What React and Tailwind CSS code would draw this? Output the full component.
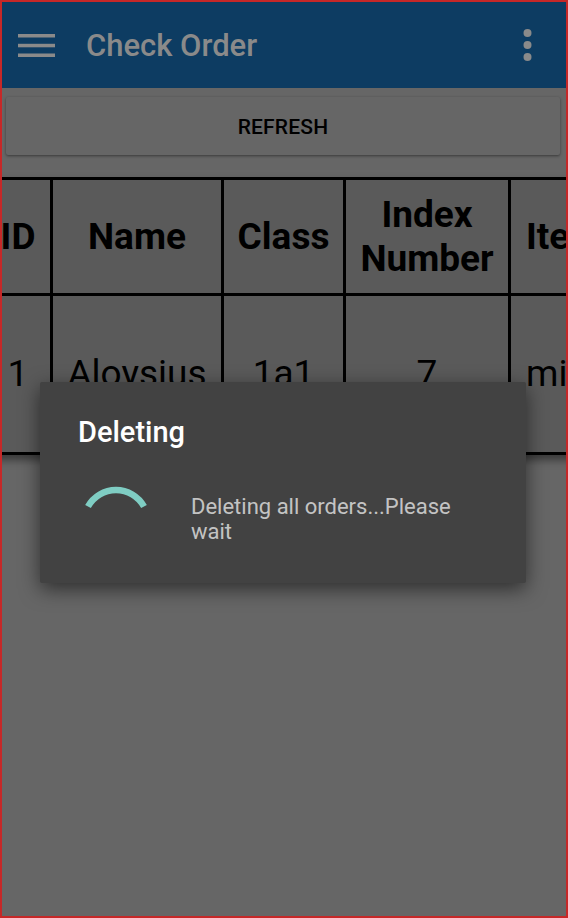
import React from "react";

const COLS = [
  { key: "id", head: ["ID"], value: "1", w: "w-[67px]", align: "justify-center items-center" },
  { key: "name", head: ["Name"], value: "Aloysius", w: "w-[171px]", align: "justify-center items-center" },
  { key: "class", head: ["Class"], value: "1a1", w: "w-[122px]", align: "justify-center items-center" },
  { key: "index", head: ["Index", "Number"], value: "7", w: "w-[165px]", align: "justify-center items-center" },
  { key: "item", head: ["Items"], value: "milo", w: "w-[160px]", align: "justify-center items-start pl-[15px]" },
];

function Spinner() {
  return (
    <svg className="w-[76px] h-[30px] shrink-0" viewBox="0 0 76 30" fill="none">
      <path
        d="M10 22.5 A32 32 0 0 1 66 22.5"
        stroke="#7fcdc3"
        strokeWidth="6.5"
        strokeLinecap="butt"
      />
    </svg>
  );
}

export default function App() {
  return (
    <div
      className="relative w-[568px] h-[918px] overflow-hidden bg-[#666666] border-2 border-[#c62828]"
      style={{ fontFamily: "Roboto, 'Noto Sans', sans-serif" }}
    >
      {/* app bar */}
      <div className="h-[86px] bg-[#0d3c62] flex items-center">
        <svg className="ml-[16px] w-[37px] h-[23px] shrink-0" viewBox="0 0 37 23">
          <rect x="0" y="0" width="37" height="3.5" fill="#8a8a8a" />
          <rect x="0" y="9.8" width="37" height="3.5" fill="#8a8a8a" />
          <rect x="0" y="19.5" width="37" height="3.5" fill="#8a8a8a" />
        </svg>
        <div className="ml-[31px] text-[31px] font-medium text-[#8a8a8a] leading-none">Check Order</div>
        <svg className="ml-auto mr-[34px] w-[9px] h-[34px]" viewBox="0 0 9 34">
          <circle cx="4.5" cy="5" r="4" fill="#8a8a8a" />
          <circle cx="4.5" cy="17" r="4" fill="#8a8a8a" />
          <circle cx="4.5" cy="29" r="4" fill="#8a8a8a" />
        </svg>
      </div>

      {/* refresh */}
      <div className="ml-[4px] mr-[6px] mt-[9px] h-[58px] rounded-[2px] bg-[#666666] shadow-[0_1px_3px_rgba(0,0,0,0.45)] flex items-center justify-center pt-[3px]">
        <span className="text-[21px] font-medium text-black tracking-[0.2px]">REFRESH</span>
      </div>

      {/* table */}
      <div className="mt-[22px] -ml-[16px] w-[720px] border-t-[3px] border-black bg-[#5a5a5a] shadow-[0_5px_8px_rgba(0,0,0,0.45)]">
        <div className="flex border-b-[3px] border-black">
          {COLS.map(c => (
            <div
              key={c.key}
              className={`${c.w} ${c.align} h-[113px] shrink-0 border-r-[3px] border-black flex flex-col text-[37px] font-bold text-black leading-[44px]`}
            >
              {c.head.map(h => <span key={h}>{h}</span>)}
            </div>
          ))}
        </div>
        <div className="flex border-b-[3px] border-black">
          {COLS.map(c => (
            <div
              key={c.key}
              className={`${c.w} ${c.align} h-[156px] shrink-0 border-r-[3px] border-black flex flex-col text-[37px] text-black`}
            >
              {c.value}
            </div>
          ))}
        </div>
      </div>

      {/* progress dialog */}
      <div className="absolute left-[38px] top-[380px] w-[486px] h-[201px] bg-[#424242] rounded-[2px] shadow-[0_6px_20px_rgba(0,0,0,0.55)]">
        <div className="pl-[38px] pt-[33px] text-[29px] font-medium text-white leading-[34px]">Deleting</div>
        <div className="mt-[35px] pl-[38px] flex items-start">
          <Spinner />
          <p className="ml-[37px] mt-[10px] w-[285px] text-[22px] leading-[25px] text-white/70">
            Deleting all orders...Please wait
          </p>
        </div>
      </div>
    </div>
  );
}
